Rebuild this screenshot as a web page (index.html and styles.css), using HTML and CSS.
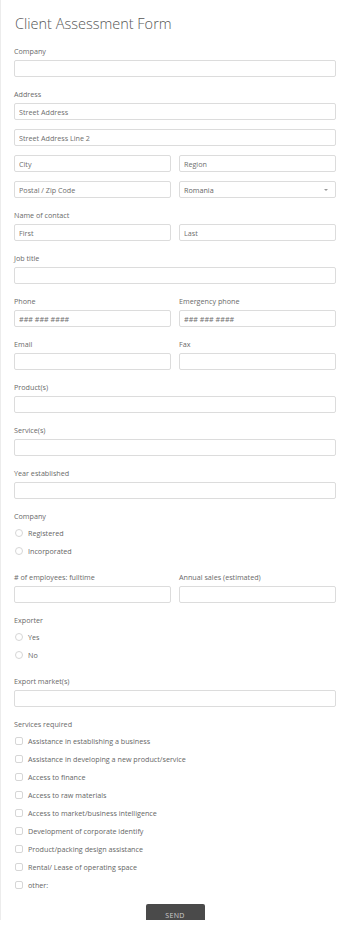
FILE: index.html
```html
<!DOCTYPE html>
<html lang="en">
<head>
  <meta charset="UTF-8">
  <meta name="viewport" content="width=device-width, initial-scale=1.0">
  <title>Client Assessment Form</title>
  <link rel="stylesheet" href="styles.css">
</head>
<body>
  <form class="form-card">
    <h1 class="form-title">Client Assessment Form</h1>

    <div class="field">
      <label class="field-label">Company</label>
      <input type="text" class="text-input">
    </div>

    <div class="field">
      <label class="field-label">Address</label>
      <div class="stack">
        <input type="text" class="text-input" placeholder="Street Address">
        <input type="text" class="text-input" placeholder="Street Address Line 2">
        <div class="row">
          <input type="text" class="text-input" placeholder="City">
          <input type="text" class="text-input" placeholder="Region">
        </div>
        <div class="row">
          <input type="text" class="text-input" placeholder="Postal / Zip Code">
          <div class="select-wrap">
            <select class="text-input select-input">
              <option>Romania</option>
            </select>
          </div>
        </div>
      </div>
    </div>

    <div class="field">
      <label class="field-label">Name of contact</label>
      <div class="row">
        <input type="text" class="text-input" placeholder="First">
        <input type="text" class="text-input" placeholder="Last">
      </div>
    </div>

    <div class="field">
      <label class="field-label">Job title</label>
      <input type="text" class="text-input">
    </div>

    <div class="row">
      <div class="field">
        <label class="field-label">Phone</label>
        <input type="tel" class="text-input" placeholder="### ### ####">
      </div>
      <div class="field">
        <label class="field-label">Emergency phone</label>
        <input type="tel" class="text-input" placeholder="### ### ####">
      </div>
    </div>

    <div class="row">
      <div class="field">
        <label class="field-label">Email</label>
        <input type="email" class="text-input">
      </div>
      <div class="field">
        <label class="field-label">Fax</label>
        <input type="text" class="text-input">
      </div>
    </div>

    <div class="field">
      <label class="field-label">Product(s)</label>
      <input type="text" class="text-input">
    </div>

    <div class="field">
      <label class="field-label">Service(s)</label>
      <input type="text" class="text-input">
    </div>

    <div class="field">
      <label class="field-label">Year established</label>
      <input type="text" class="text-input">
    </div>

    <div class="field">
      <label class="field-label choice-title">Company</label>
      <label class="choice"><input type="radio" name="company"> Registered</label>
      <label class="choice"><input type="radio" name="company"> Incorporated</label>
    </div>

    <div class="row">
      <div class="field">
        <label class="field-label"># of employees: fulltime</label>
        <input type="text" class="text-input">
      </div>
      <div class="field">
        <label class="field-label">Annual sales (estimated)</label>
        <input type="text" class="text-input">
      </div>
    </div>

    <div class="field">
      <label class="field-label choice-title">Exporter</label>
      <label class="choice"><input type="radio" name="exporter"> Yes</label>
      <label class="choice"><input type="radio" name="exporter"> No</label>
    </div>

    <div class="field">
      <label class="field-label">Export market(s)</label>
      <input type="text" class="text-input">
    </div>

    <div class="field">
      <label class="field-label choice-title">Services required</label>
      <label class="choice"><input type="checkbox"> Assistance in establishing a business</label>
      <label class="choice"><input type="checkbox"> Assistance in developing a new product/service</label>
      <label class="choice"><input type="checkbox"> Access to finance</label>
      <label class="choice"><input type="checkbox"> Access to raw materials</label>
      <label class="choice"><input type="checkbox"> Access to market/business intelligence</label>
      <label class="choice"><input type="checkbox"> Development of corporate identify</label>
      <label class="choice"><input type="checkbox"> Product/packing design assistance</label>
      <label class="choice"><input type="checkbox"> Rental/ Lease of operating space</label>
      <label class="choice"><input type="checkbox"> other:</label>
    </div>

    <div class="actions">
      <button type="submit" class="send-btn">SEND</button>
    </div>
  </form>
</body>
</html>
```

FILE: styles.css
```css
body {
  margin: 0;
  background: #fff;
  font-family: "Open Sans", Arial, sans-serif;
  color: #666;
}
.form-card {
  height: 920px;
  overflow: hidden;
  box-sizing: border-box;
  border-left: 1px solid #ececec;
  padding: 14px 14px 0 13px;
}
.form-title {
  margin: 0 0 12px 1px;
  font-size: 14.5px;
  line-height: 20px;
  font-weight: 300;
  color: #555;
}
.field {
  margin-bottom: 12px;
  min-width: 0;
}
.field-label {
  display: block;
  font-size: 7.2px;
  line-height: 10px;
  margin-bottom: 4px;
  color: #6a6a6a;
}
.choice-title {
  margin-bottom: 3px;
}
.text-input {
  display: block;
  width: 100%;
  height: 17px;
  box-sizing: border-box;
  margin: 0;
  padding: 0 4px;
  border: 1px solid #dcdcdc;
  border-radius: 2px;
  background: #fff;
  font-family: "Open Sans", Arial, sans-serif;
  font-size: 7.2px;
  color: #666;
  outline: none;
}
.text-input::placeholder {
  color: #6e6e6e;
}
.stack {
  display: flex;
  flex-direction: column;
  gap: 9px;
}
.row {
  display: grid;
  grid-template-columns: 1fr 1fr;
  gap: 8px;
}
.select-wrap {
  position: relative;
  min-width: 0;
}
.select-input {
  appearance: none;
  -webkit-appearance: none;
}
.select-wrap::after {
  content: "";
  position: absolute;
  right: 8px;
  top: 8px;
  border-left: 2px solid transparent;
  border-right: 2px solid transparent;
  border-top: 2px solid #999;
}
.choice {
  display: flex;
  align-items: center;
  gap: 5px;
  height: 18px;
  font-size: 7.2px;
  color: #666;
  margin-left: 1px;
}
.choice input {
  appearance: none;
  -webkit-appearance: none;
  width: 8px;
  height: 8px;
  margin: 0;
  border: 1px solid #d6d6d6;
  background: #fff;
  flex-shrink: 0;
}
.choice input[type="radio"] {
  border-radius: 50%;
}
.choice input[type="checkbox"] {
  border-radius: 2px;
}
.actions {
  display: flex;
  justify-content: center;
  margin-top: -2px;
}
.send-btn {
  width: 59px;
  height: 22px;
  border: none;
  border-radius: 2px 2px 0 0;
  background: #4a4a4a;
  color: #cfcfcf;
  font-family: "Open Sans", Arial, sans-serif;
  font-size: 7px;
  letter-spacing: 0.3px;
  cursor: pointer;
}
```
